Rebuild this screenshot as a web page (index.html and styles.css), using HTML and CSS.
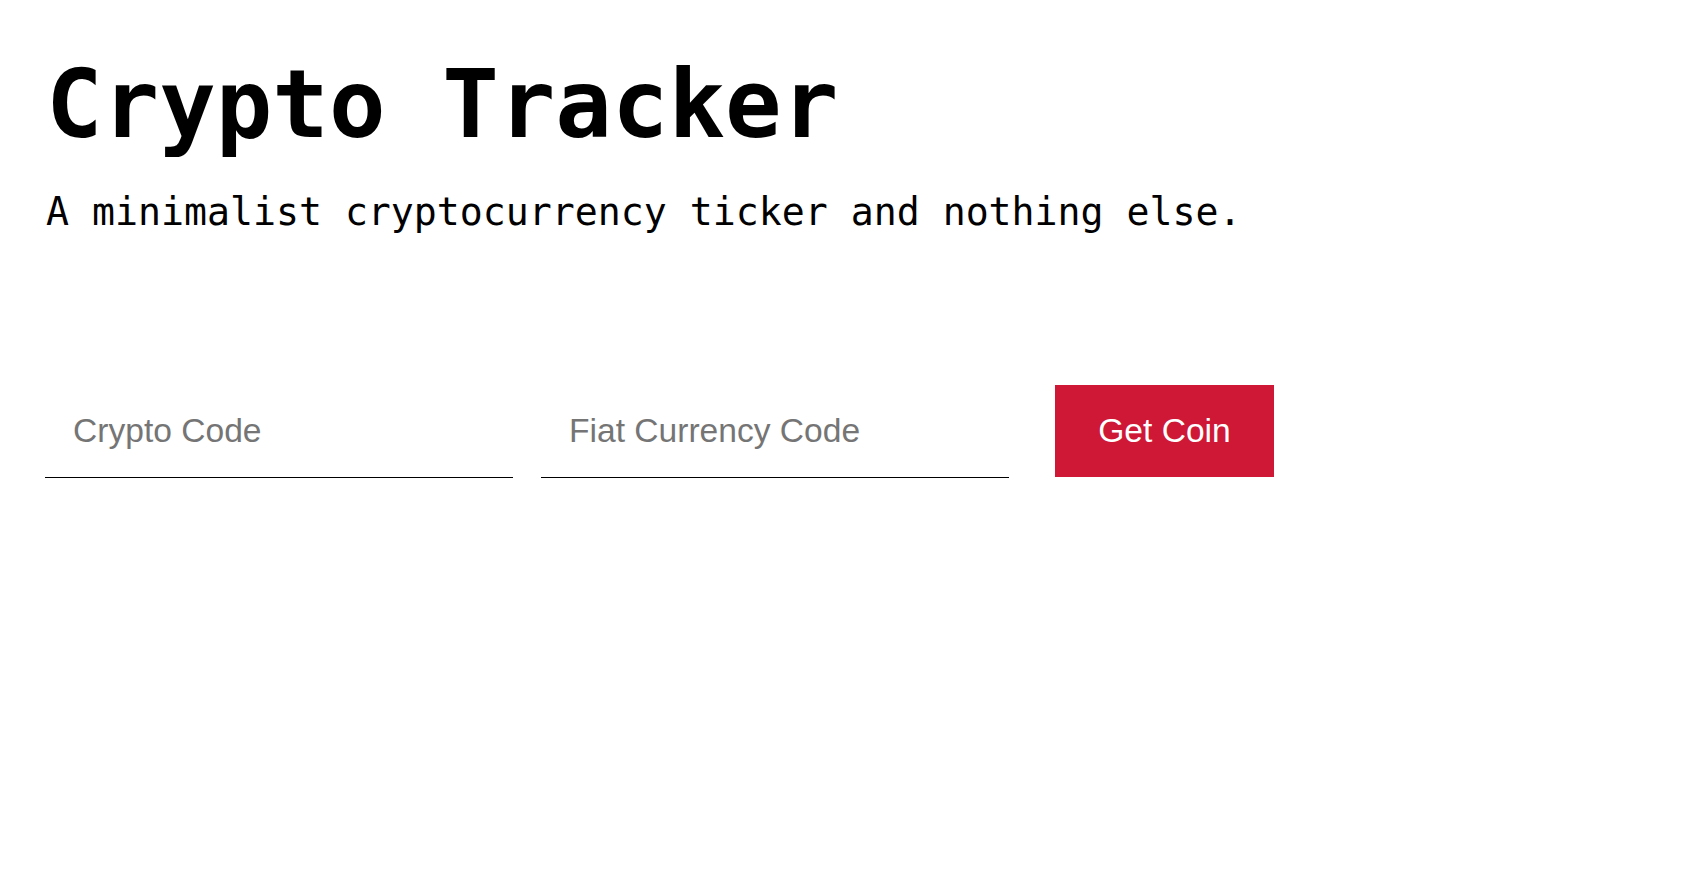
FILE: index.html
```html
<!DOCTYPE html>
<html lang="en">
<head>
<meta charset="utf-8">
<title>Crypto Tracker</title>
<link rel="stylesheet" href="styles.css">
</head>
<body>
<main class="page">
  <header class="hero">
    <h1 class="title">Crypto Tracker</h1>
    <p class="subtitle">A minimalist cryptocurrency ticker and nothing else.</p>
  </header>
  <form class="search" onsubmit="return false">
    <input class="field" type="text" placeholder="Crypto Code">
    <input class="field" type="text" placeholder="Fiat Currency Code">
    <button class="submit" type="submit">Get Coin</button>
  </form>
</main>
</body>
</html>
```

FILE: styles.css
```css
html, body {
  margin: 0;
  padding: 0;
  background: #ffffff;
}

.page {
  padding: 47px 0 0 46px;
}

.hero {
  display: flex;
  flex-direction: column;
}

.title {
  margin: 0;
  font-family: "DejaVu Sans Mono", "Liberation Mono", monospace;
  font-weight: bold;
  font-size: 94px;
  line-height: 115px;
  color: #000;
}

.subtitle {
  margin: 27px 0 0 0;
  font-family: "DejaVu Sans Mono", "Liberation Mono", monospace;
  font-weight: normal;
  font-size: 38.2px;
  line-height: 46px;
  color: #000;
}

.search {
  display: flex;
  align-items: stretch;
  margin-top: 150px;
  margin-left: -1px;
}

.field {
  box-sizing: border-box;
  width: 468px;
  height: 93px;
  margin: 0 28px 0 0;
  padding: 0 0 0 28px;
  border: none;
  border-bottom: 1px solid #000;
  outline: none;
  font-family: "Liberation Sans", Arial, sans-serif;
  font-size: 33.6px;
  color: #000;
  background: transparent;
}

.field::placeholder {
  color: #757575;
}

.submit {
  box-sizing: border-box;
  width: 219px;
  height: 92px;
  margin-left: 18px;
  border: none;
  background: #cf1736;
  color: #fff;
  font-family: "Liberation Sans", Arial, sans-serif;
  font-size: 33.6px;
  cursor: pointer;
}
```
